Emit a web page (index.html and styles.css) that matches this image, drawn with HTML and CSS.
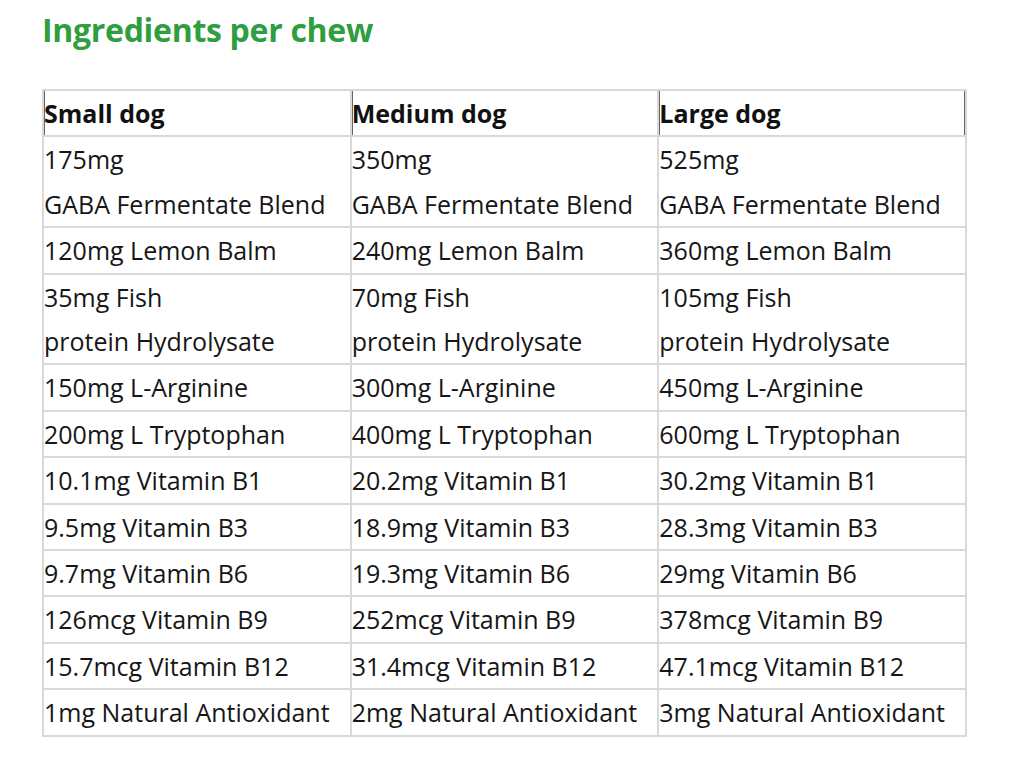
FILE: index.html
```html
<!DOCTYPE html>
<html lang="en">
<head>
<meta charset="utf-8">
<title>Ingredients per chew</title>
<link rel="stylesheet" href="styles.css">
</head>
<body>
<div class="page">
  <h1 class="title">Ingredients per chew</h1>
  <table class="ing">
    <thead>
      <tr><th>Small dog</th><th>Medium dog</th><th>Large dog</th></tr>
    </thead>
    <tbody>
      <tr><td>175mg<br>GABA Fermentate Blend</td><td>350mg<br>GABA Fermentate Blend</td><td>525mg<br>GABA Fermentate Blend</td></tr>
      <tr><td>120mg Lemon Balm</td><td>240mg Lemon Balm</td><td>360mg Lemon Balm</td></tr>
      <tr><td>35mg Fish<br>protein Hydrolysate</td><td>70mg Fish<br>protein Hydrolysate</td><td>105mg Fish<br>protein Hydrolysate</td></tr>
      <tr><td>150mg L-Arginine</td><td>300mg L-Arginine</td><td>450mg L-Arginine</td></tr>
      <tr><td>200mg L Tryptophan</td><td>400mg L Tryptophan</td><td>600mg L Tryptophan</td></tr>
      <tr><td>10.1mg Vitamin B1</td><td>20.2mg Vitamin B1</td><td>30.2mg Vitamin B1</td></tr>
      <tr><td>9.5mg Vitamin B3</td><td>18.9mg Vitamin B3</td><td>28.3mg Vitamin B3</td></tr>
      <tr><td>9.7mg Vitamin B6</td><td>19.3mg Vitamin B6</td><td>29mg Vitamin B6</td></tr>
      <tr><td>126mcg Vitamin B9</td><td>252mcg Vitamin B9</td><td>378mcg Vitamin B9</td></tr>
      <tr><td>15.7mcg Vitamin B12</td><td>31.4mcg Vitamin B12</td><td>47.1mcg Vitamin B12</td></tr>
      <tr><td>1mg Natural Antioxidant</td><td>2mg Natural Antioxidant</td><td>3mg Natural Antioxidant</td></tr>
    </tbody>
  </table>
</div>
</body>
</html>
```
FILE: styles.css
```css
html, body {
  margin: 0;
  padding: 0;
  background: #ffffff;
}
.page {
  padding: 8px 0 0 42px;
  font-family: "Open Sans", "Noto Sans", sans-serif;
  color: #161616;
}
.title {
  margin: 0;
  font-size: 32px;
  line-height: 44px;
  font-weight: 700;
  color: #2f9e3f;
  letter-spacing: -0.3px;
}
.ing {
  margin-top: 37px;
  width: 925px;
  border-collapse: collapse;
  table-layout: fixed;
  font-size: 25px;
}
.ing th,
.ing td {
  border: 2px solid #d9d9d9;
  padding: 0;
  line-height: 44.4px;
  text-align: left;
  vertical-align: top;
  white-space: nowrap;
}
.ing th {
  font-weight: 700;
  color: #111;
  box-shadow: inset 1px 0 0 #666;
}
.ing th:last-child {
  box-shadow: inset 1px 0 0 #666, inset -1px 0 0 #666;
}
```
